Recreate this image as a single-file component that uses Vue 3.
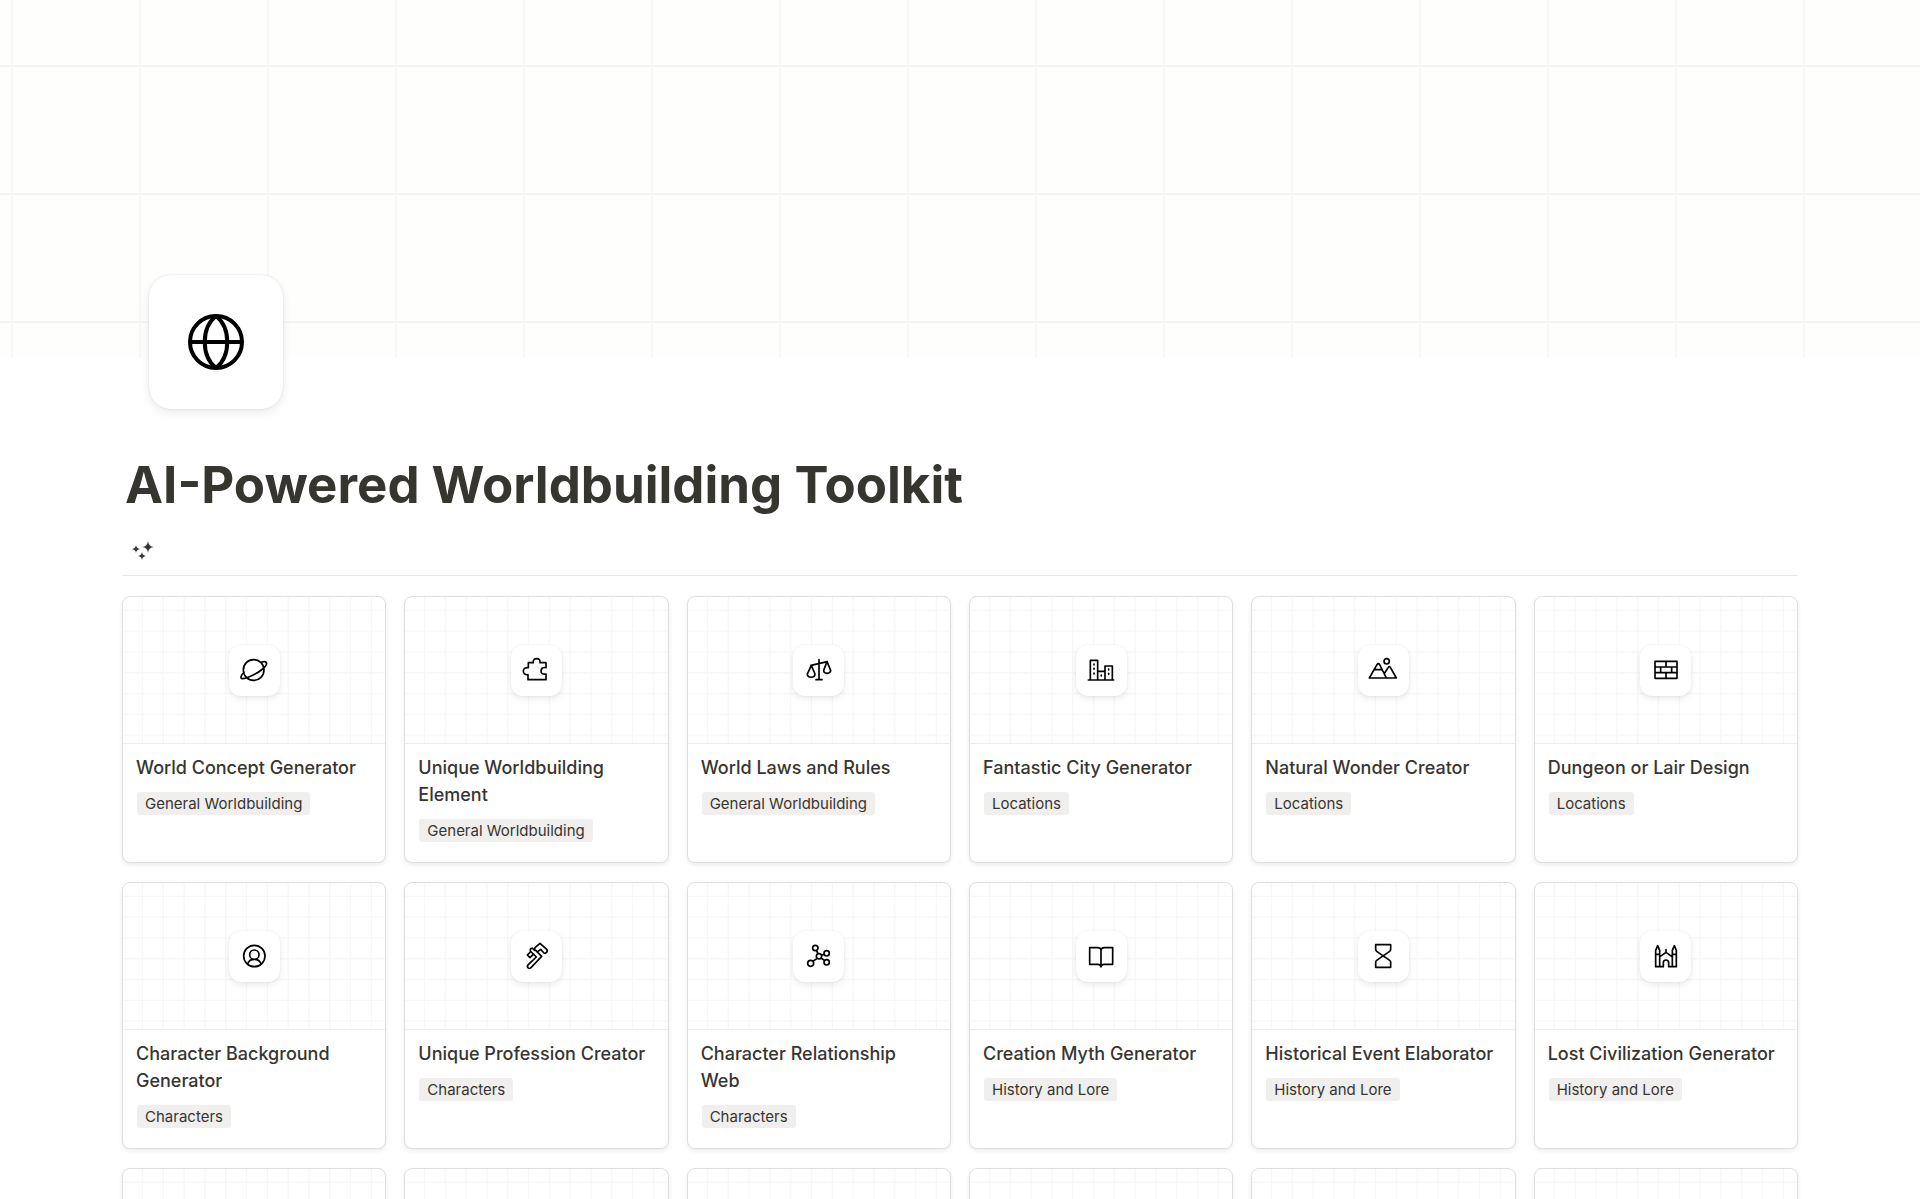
<template>
  <div class="page">
    <header class="cover"></header>

    <main class="content">
      <div class="page-icon">
        <svg viewBox="0 0 56 56" aria-hidden="true">
          <circle cx="28" cy="28" r="26" />
          <path d="M28 2C13 14 13 42 28 54C43 42 43 14 28 2Z" />
          <path d="M2 28H54" />
        </svg>
      </div>

      <h1>AI-Powered Worldbuilding Toolkit</h1>

      <div class="view-bar">
        <button type="button" class="view-tab" aria-label="Gallery view">
          <svg viewBox="0 0 24 24" aria-hidden="true">
            <path d="M17 2Q17.400 7.600 23 8Q17.400 8.400 17 14Q16.600 8.400 11 8Q16.600 7.600 17 2Z" />
            <path d="M5 6Q5.400 9.600 9 10Q5.400 10.400 5 14Q4.600 10.400 1 10Q4.600 9.600 5 6Z" />
            <path d="M11 13Q11.400 16.600 15 17Q11.400 17.400 11 21Q10.600 17.400 7 17Q10.600 16.600 11 13Z" />
          </svg>
        </button>
      </div>

      <div class="gallery">
        <article v-for="card in cards" :key="card.id" class="card">
          <div class="card-cover">
            <svg class="card-grid" viewBox="0 0 1614 900" preserveAspectRatio="xMidYMid slice" aria-hidden="true">
              <path v-for="n in 12" :key="'v' + n" :d="`M${n * 128 - 8} 0V900`" />
              <path v-for="n in 7" :key="'h' + n" :d="`M0 ${n * 128 - 45}H1614`" />
            </svg>
            <div v-if="card.icon" class="card-icon">
              <svg viewBox="-45 -45 90 90" aria-hidden="true">
                <path :d="icons[card.icon]" />
              </svg>
            </div>
          </div>
          <div class="card-body">
            <h2 v-if="card.title">{{ card.title }}</h2>
            <span v-if="card.tag" class="tag">{{ card.tag }}</span>
          </div>
        </article>
      </div>
    </main>
  </div>
</template>

<script setup>
const cards = [
  { id: 1, title: 'World Concept Generator', tag: 'General Worldbuilding', icon: 'planet' },
  { id: 2, title: 'Unique Worldbuilding Element', tag: 'General Worldbuilding', icon: 'puzzle' },
  { id: 3, title: 'World Laws and Rules', tag: 'General Worldbuilding', icon: 'scales' },
  { id: 4, title: 'Fantastic City Generator', tag: 'Locations', icon: 'city' },
  { id: 5, title: 'Natural Wonder Creator', tag: 'Locations', icon: 'mountains' },
  { id: 6, title: 'Dungeon or Lair Design', tag: 'Locations', icon: 'bricks' },
  { id: 7, title: 'Character Background Generator', tag: 'Characters', icon: 'person' },
  { id: 8, title: 'Unique Profession Creator', tag: 'Characters', icon: 'hammer' },
  { id: 9, title: 'Character Relationship Web', tag: 'Characters', icon: 'network' },
  { id: 10, title: 'Creation Myth Generator', tag: 'History and Lore', icon: 'book' },
  { id: 11, title: 'Historical Event Elaborator', tag: 'History and Lore', icon: 'hourglass' },
  { id: 12, title: 'Lost Civilization Generator', tag: 'History and Lore', icon: 'castle' },
  { id: 13 },
  { id: 14 },
  { id: 15 },
  { id: 16 },
  { id: 17 },
  { id: 18 },
];

// circle as a path segment, so every icon is a single path
const dot = (x, y, r) => `M${x - r} ${y}a${r} ${r} 0 1 0 ${2 * r} 0a${r} ${r} 0 1 0 ${-2 * r} 0`;

const icons = {
  planet: dot(-1, 0, 31) + 'M-30 8C-38 13 -43 25 -35 26C-24 27 8 12 26 -3C36 -11 41 -20 35 -24C32 -26 27 -25 21 -23',
  puzzle: 'M-23 -22H-8C-9 -31 -5 -34 2 -34C9 -34 13 -31 12 -22H30V-7C20 -9 15 -4 15 3C15 10 20 14 30 12V29H-24V14C-33 15 -38 10 -38 3C-38 -4 -33 -8 -23 -7Z',
  scales: 'M0 -31V29M-9 29H9M-24 -14L25 -25M-23 -14L-35 12C-35 25 -12 25 -12 12ZM24 -25L14 1C14 13 35 13 35 1Z',
  city: 'M-38 30H38M-32 30V-29H-10V30M-10 4H12M12 30V-12H34V30M-21 -18V-15M-21 -5V-2M-21 9V12M1 15V18M23 -3V0M23 10V13',
  mountains: dot(11, -26, 8) + 'M10 24L-10 -16Q-14 -22 -18 -16L-41 24H40L22 -8Q19 -13 16 -8L5 9M-25 -1H-3',
  bricks: 'M-33 -26H33V25H-33ZM-33 -9H33M-33 8H33M0 -26V-9M-16 -9V8M17 -9V8M0 8V25',
  person: dot(1, 0, 32) + dot(1, -4, 14) + 'M-19 24C-16 13 -8 10 1 10C10 10 18 13 21 24',
  hammer: 'M-3 -25L12 -38L33 -19Q36 -12 28 -8L24 -9L14 -20L6 -14M-1 -17L17 1L-15 35Q-20 40 -24 35Q-28 31 -23 26L1 3L-17 -15Q-19 -24 -10 -23L-5 -17L-3 -25M-18 -11L-26 -3L-18 5L-9 -4',
  network: dot(-11, -24, 8) + dot(23, -8, 8) + dot(0, 1, 8) + dot(-25, 22, 9) + dot(23, 19, 8) + 'M-8 -17L-3 -7M8 -2L15 -5M-6 7L-18 16M6 6L17 14',
  book: 'M-34 -25H-9Q0 -24 0 -17Q0 -24 10 -25H35V25H9Q1 25 0 33Q-1 25 -9 25H-34ZM0 -17V32',
  hourglass: 'M-22 -34H23V-20Q23 -16 20 -14L-19 13Q-22 15 -22 19V34H23V19Q23 15 20 13L-19 -14Q-22 -16 -22 -20Z',
  castle: 'M-31 32V-17L-25 -31L-19 -17V32M-31 -5H-19M31 32V-17L25 -31L19 -17V32M31 -5H19M-17 1L0 -11L17 1M0 -11V-19M-31 32H-8V20Q-8 12 0 12Q8 12 8 20V32H31',
};
</script>

<style>
body {
  margin: 0;
  background: #ffffff;
}
</style>

<style scoped>
.page {
  height: 100vh;
  overflow: hidden;
  font-family: Inter, "Liberation Sans", sans-serif;
  color: #373530;
}

.cover {
  height: 358px;
  background-color: #fefefc;
  background-image:
    linear-gradient(to right, #f7f7f6 2px, transparent 2px),
    linear-gradient(to bottom, #f5f5f4 2px, transparent 2px);
  background-size: 128px 128px;
  background-position: 11px 65px;
}

.content {
  padding: 0 122px;
}

.page-icon {
  position: relative;
  display: flex;
  align-items: center;
  justify-content: center;
  width: 134px;
  height: 134px;
  margin: -83px 0 0 27px;
  border-radius: 22px;
  background: #ffffff;
  box-shadow: 0 0 2px rgba(0, 0, 0, 0.12), 0 4px 10px rgba(0, 0, 0, 0.08);
}

.page-icon svg {
  width: 56px;
  height: 56px;
  fill: none;
  stroke: #000000;
  stroke-width: 4;
  stroke-linejoin: round;
}

h1 {
  margin: 46px 3px 0;
  font-size: 51px;
  line-height: 60px;
  font-weight: 700;
}

.view-bar {
  display: flex;
  align-items: flex-end;
  height: 60px;
  border-bottom: 1px solid #e6e6e5;
}

.view-tab {
  display: flex;
  padding: 12px 9px;
  border: none;
  border-radius: 4px;
  background: none;
  cursor: pointer;
}

.view-tab:hover {
  background: #f1f1ef;
}

.view-tab svg {
  width: 24px;
  height: 24px;
  fill: #373530;
}

.gallery {
  display: grid;
  grid-template-columns: repeat(6, 1fr);
  gap: 19px 18px;
  padding-top: 20px;
}

.card {
  min-height: 265px;
  border: 1px solid #dfdfde;
  border-radius: 8px;
  background: #ffffff;
  box-shadow: 0 2px 4px rgba(0, 0, 0, 0.08);
  overflow: hidden;
}

.card-cover {
  display: grid;
  place-items: center;
  height: 146px;
  border-bottom: 1px solid #ececeb;
}

.card-cover > * {
  grid-area: 1 / 1;
}

.card-grid {
  width: 100%;
  height: 146px;
  stroke: #f7f7f7;
  stroke-width: 8;
}

.card-icon {
  display: flex;
  align-items: center;
  justify-content: center;
  width: 51px;
  height: 51px;
  border-radius: 12px;
  background: #ffffff;
  box-shadow: 0 0 2px rgba(0, 0, 0, 0.08), 0 3px 6px rgba(0, 0, 0, 0.08);
  z-index: 1;
}

.card-icon svg {
  width: 30px;
  height: 30px;
  fill: none;
  stroke: #000000;
  stroke-width: 5;
  stroke-linecap: round;
  stroke-linejoin: round;
}

.card-body {
  padding: 10px 13px 20px;
}

h2 {
  margin: 0 0 11px;
  font-size: 18px;
  line-height: 27px;
  font-weight: 500;
}

.tag {
  display: block;
  width: fit-content;
  margin-left: 1px;
  padding: 0 8px;
  border-radius: 3px;
  background: #f0efed;
  font-size: 15px;
  line-height: 23px;
}
</style>
